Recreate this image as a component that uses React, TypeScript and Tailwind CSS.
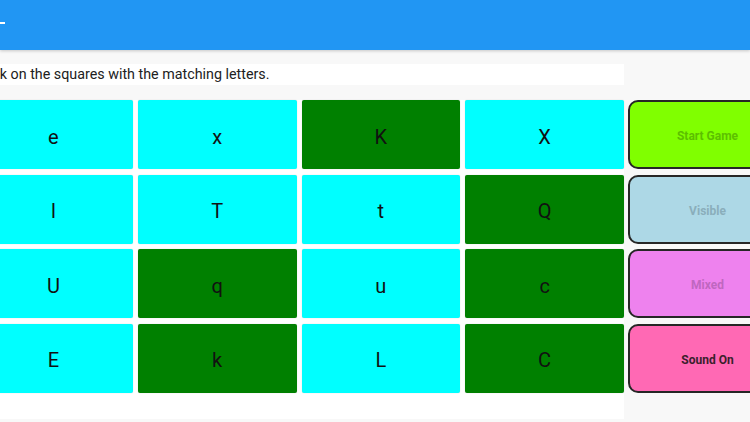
import React from "react";

type Cell = { letter: string; match: boolean };

const cells: Cell[] = [
  { letter: "e", match: false },
  { letter: "x", match: false },
  { letter: "K", match: true },
  { letter: "X", match: false },
  { letter: "l", match: false },
  { letter: "T", match: false },
  { letter: "t", match: false },
  { letter: "Q", match: true },
  { letter: "U", match: false },
  { letter: "q", match: true },
  { letter: "u", match: false },
  { letter: "c", match: true },
  { letter: "E", match: false },
  { letter: "k", match: true },
  { letter: "L", match: false },
  { letter: "C", match: true },
];

const buttons = [
  { label: "Start Game", className: "bg-[#80ff00] text-[#5cbf00]" },
  { label: "Visible", className: "bg-[#add8e6] text-[#8aaebb]" },
  { label: "Mixed", className: "bg-[#ee82ee] text-[#bf67c0]" },
  { label: "Sound On", className: "bg-[#ff69b4] text-[#3a1f2c]" },
];

export default function App() {
  return (
    <div className="w-[750px] h-[422px] overflow-hidden bg-[#f8f8f8] font-['Roboto','Liberation_Sans',sans-serif]">
      {/* App bar */}
      <div className="h-[50px] bg-[#2196f3] flex items-center shadow-[0_1px_3px_rgba(0,0,0,0.2)] relative">
        <span className="block w-[5px] h-[2px] bg-white mt-[-4px]" />
      </div>

      <div className="flex ml-[-26px] pt-[14px] w-[900px]">
        {/* Game board */}
        <div className="w-[650px] shrink-0 flex flex-col">
          <div className="h-[21px] bg-white flex items-center pl-[2px] text-[14.3px] leading-none text-[#212121] whitespace-nowrap">
            Click on the squares with the matching letters.
          </div>
          <div className="mt-[15px] bg-white grid grid-cols-4 gap-x-[5px] gap-y-[5.5px] pb-[26px]">
            {cells.map((c, i) => (
              <div
                key={i}
                className={`h-[69px] rounded-[2px] shadow-[0_0_1px_rgba(0,0,0,0.25)] flex items-center justify-center pt-[4px] text-[20px] text-[#111] ${
                  c.match ? "bg-[#008000]" : "bg-[#00ffff]"
                }`}
              >
                {c.letter}
              </div>
            ))}
          </div>
        </div>

        {/* Controls */}
        <div className="shrink-0 flex flex-col gap-y-[5.5px] pl-[4px] pt-[36px]">
          {buttons.map((b) => (
            <div
              key={b.label}
              className={`w-[159px] h-[69px] rounded-[10px] border-2 border-[#262626] flex items-center justify-center pt-[3px] text-[12px] font-bold ${b.className}`}
            >
              {b.label}
            </div>
          ))}
        </div>
      </div>
    </div>
  );
}
